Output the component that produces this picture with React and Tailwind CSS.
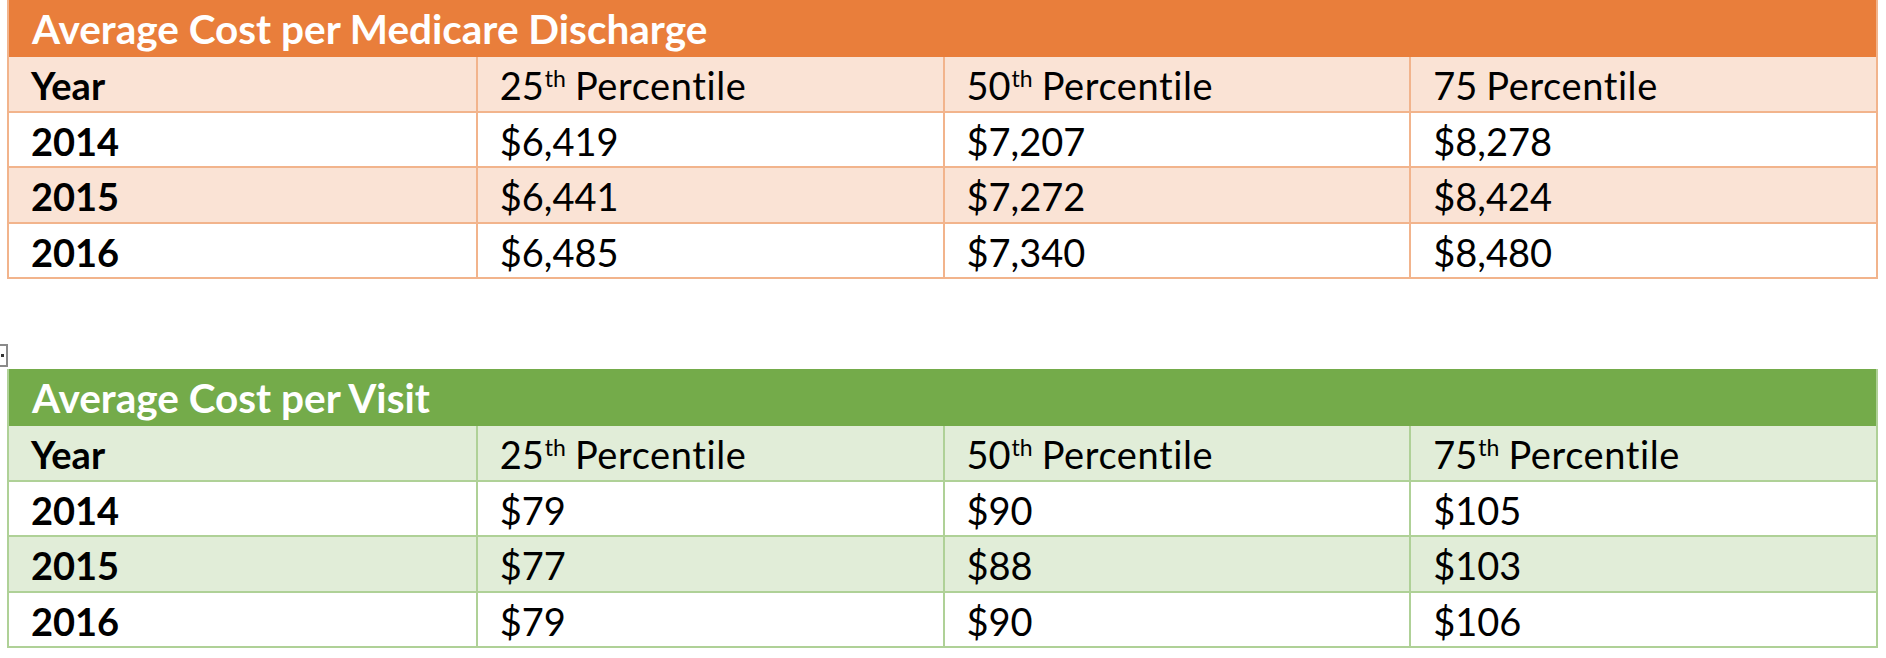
import React from "react";

const dischargeRows = [
  ["2014", "$6,419", "$7,207", "$8,278"],
  ["2015", "$6,441", "$7,272", "$8,424"],
  ["2016", "$6,485", "$7,340", "$8,480"],
];

const visitRows = [
  ["2014", "$79", "$90", "$105"],
  ["2015", "$77", "$88", "$103"],
  ["2016", "$79", "$90", "$106"],
];

const themes = {
  orange: {
    head: "bg-[#E97E3B]",
    band: "bg-[#FAE3D5]",
    line: "border-[#F2B48C]",
  },
  green: {
    head: "bg-[#74AB4A]",
    band: "bg-[#E1EDD8]",
    line: "border-[#AFD197]",
  },
};

const Ordinal = ({ n, suffix }) => (
  <span>
    {n}
    {suffix && <sup className="text-[23px] relative -top-[13px] ml-[1px]">{suffix}</sup>}
  </span>
);

const CostTable = ({ title, color, headers, rows }) => {
  const t = themes[color];
  return (
    <div className={`w-[1871px] ml-[7px] border-l-2 border-r-2 ${t.line}`}>
      <div
        className={`${t.head} h-[57px] flex items-center pl-[23px] pt-[2px] text-white font-bold text-[40.5px]`}
      >
        {title}
      </div>
      <div className={`grid grid-cols-4 h-[55.5px] ${t.band} border-b-2 ${t.line}`}>
        <div className="flex items-center pl-[22px] pt-[3px] font-bold">Year</div>
        {headers.map((h, i) => (
          <div key={i} className={`flex items-center pl-[22px] pt-[3px] border-l-2 ${t.line}`}>
            <Ordinal n={h.n} suffix={h.suffix} />
            <span className="ml-[9px] tracking-[0.6px]">Percentile</span>
          </div>
        ))}
      </div>
      {rows.map((r, ri) => (
        <div
          key={r[0]}
          className={`grid grid-cols-4 h-[55.5px] border-b-2 ${t.line} ${ri % 2 === 1 ? t.band : "bg-white"}`}
        >
          <div className="flex items-center pl-[22px] pt-[3px] font-bold">{r[0]}</div>
          {r.slice(1).map((v, i) => (
            <div key={i} className={`flex items-center pl-[22px] pt-[3px] border-l-2 ${t.line}`}>
              {v}
            </div>
          ))}
        </div>
      ))}
    </div>
  );
}

export default function App() {
  return (
    <div className="relative w-[1886px] h-[658px] bg-white text-black text-[38px] font-['Lato','Liberation_Sans',sans-serif] leading-none [font-variant-ligatures:none]">
      <CostTable
        title="Average Cost per Medicare Discharge"
        color="orange"
        headers={[
          { n: "25", suffix: "th" },
          { n: "50", suffix: "th" },
          { n: "75" },
        ]}
        rows={dischargeRows}
      />
      {/* table move handle */}
      <div className="absolute left-0 top-[344px] w-[8px] h-[23px] border-2 border-l-0 border-[#8a8a8a] bg-white flex items-center">
        <div className="w-[3px] h-[3px] bg-[#333] ml-[1px]" />
      </div>
      <div className="mt-[90px]">
        <CostTable
          title="Average Cost per Visit"
          color="green"
          headers={[
            { n: "25", suffix: "th" },
            { n: "50", suffix: "th" },
            { n: "75", suffix: "th" },
          ]}
          rows={visitRows}
        />
      </div>
    </div>
  );
}
